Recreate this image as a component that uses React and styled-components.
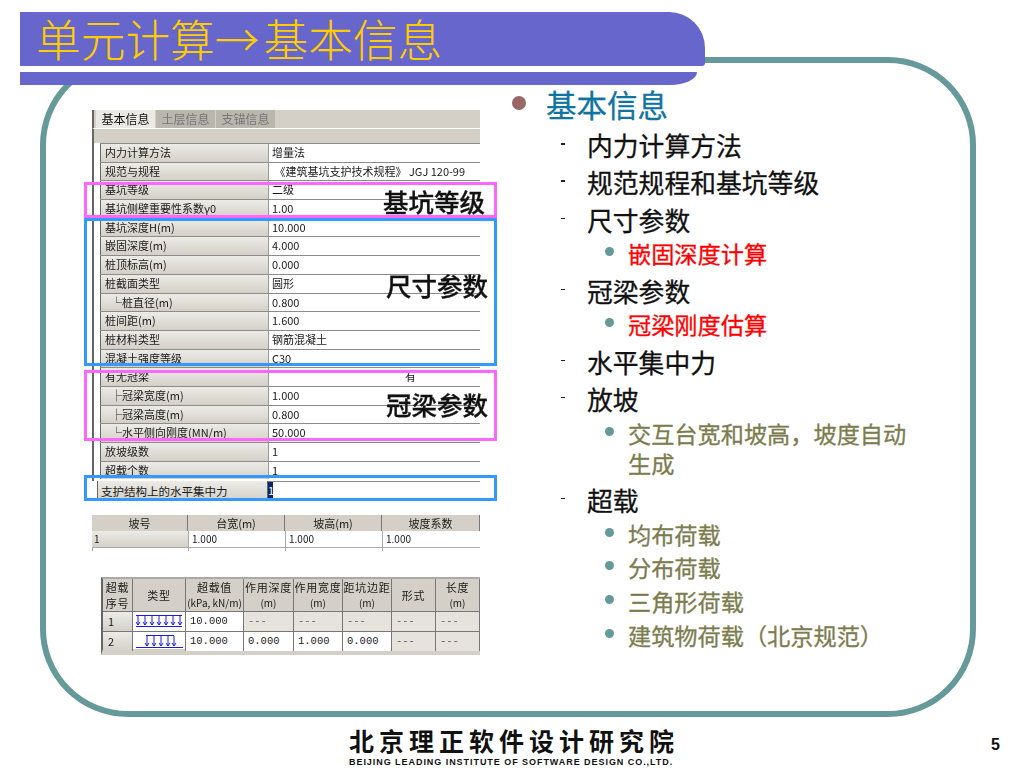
import styled, { createGlobalStyle } from 'styled-components'

const CJK = `"Noto Sans CJK SC", "Liberation Sans", sans-serif`

const GlobalStyle = createGlobalStyle`
  html, body {
    margin: 0;
    padding: 0;
    background: #fff;
    font-family: ${CJK};
  }
`

const formRows = [
  ['内力计算方法', '增量法'],
  ['规范与规程', ' 《建筑基坑支护技术规程》 JGJ 120-99'],
  ['基坑等级', '二级'],
  ['基坑侧壁重要性系数γ0', '1.00'],
  ['基坑深度H(m)', '10.000'],
  ['嵌固深度(m)', '4.000'],
  ['桩顶标高(m)', '0.000'],
  ['桩截面类型', '圆形'],
  ['└桩直径(m)', '0.800', true],
  ['桩间距(m)', '1.600'],
  ['桩材料类型', '钢筋混凝土'],
  ['混凝土强度等级', 'C30'],
  ['有无冠梁', '有'],
  ['├冠梁宽度(m)', '1.000', true],
  ['├冠梁高度(m)', '0.800', true],
  ['└水平侧向刚度(MN/m)', '50.000', true],
  ['放坡级数', '1'],
  ['超载个数', '1'],
]

const slopeCols = ['坡号', '台宽(m)', '坡高(m)', '坡度系数']
const loadCols = [
  ['超载', '序号'],
  ['类型'],
  ['超载值', '(kPa, kN/m)'],
  ['作用深度', '(m)'],
  ['作用宽度', '(m)'],
  ['距坑边距', '(m)'],
  ['形式'],
  ['长度', '(m)'],
]
const loadRows = [
  { no: '1', wide: true, vals: ['10.000', '---', '---', '---', '---', '---'] },
  { no: '2', wide: false, vals: ['10.000', '0.000', '1.000', '0.000', '---', '---'] },
]

const outline = [
  { level: 1, text: '基本信息' },
  { level: 2, text: '内力计算方法' },
  { level: 2, text: '规范规程和基坑等级' },
  { level: 2, text: '尺寸参数' },
  { level: 3, text: '嵌固深度计算', tone: 'red' },
  { level: 2, text: '冠梁参数' },
  { level: 3, text: '冠梁刚度估算', tone: 'red' },
  { level: 2, text: '水平集中力' },
  { level: 2, text: '放坡' },
  { level: 3, text: '交互台宽和坡高，坡度自动生成' },
  { level: 2, text: '超载' },
  { level: 3, text: '均布荷载' },
  { level: 3, text: '分布荷载' },
  { level: 3, text: '三角形荷载' },
  { level: 3, text: '建筑物荷载（北京规范）' },
]

const LoadIcon = ({ wide }) => (
  <svg width="50" height="15" viewBox="0 0 50 15" fill="none" stroke="#1a1ae0" strokeWidth="1">
    {wide ? (
      <>
        <path d="M2 1.5H48M2 12.5H48" />
        {[4, 11, 18, 25, 32, 39, 46].map((x) => (
          <path key={x} d={`M${x} 2V11M${x - 2} 8L${x} 11L${x + 2} 8`} />
        ))}
      </>
    ) : (
      <>
        <path d="M12 1.5H40M2 13.5H49" />
        {[13, 20, 27, 34, 40].map((x) => (
          <path key={x} d={`M${x} 2V12M${x - 2} 9L${x} 12L${x + 2} 9`} />
        ))}
      </>
    )}
  </svg>
)

const App = () => {
  return (
    <>
      <GlobalStyle />
      <Slide>
        <Banner>
          <BannerTop>
            <BannerTitle>
              单元计算<Arrow>→</Arrow>基本信息
            </BannerTitle>
          </BannerTop>
          <BannerBottom />
        </Banner>

        <Panel>
          <Shot>
            <FormWindow>
              <TabStrip>
                <Tab $active>基本信息</Tab>
                <Tab>土层信息</Tab>
                <Tab>支锚信息</Tab>
              </TabStrip>
              <FormTable>
                {formRows.map(([label, value, indent]) => (
                  <FormRow key={label}>
                    <FormLabel $indent={indent}>{label}</FormLabel>
                    <FormValue $center={value === '有'}>{value}</FormValue>
                  </FormRow>
                ))}
              </FormTable>
              <ForceRow>
                <ForceLabel>支护结构上的水平集中力</ForceLabel>
                <ForceValue>
                  <Selected>1</Selected>
                </ForceValue>
              </ForceRow>

              <Mark $color="#ff66ff" $top={72} $height={36}>
                <MarkText>基坑等级</MarkText>
              </Mark>
              <Mark $color="#3399ff" $top={108} $height={148}>
                <MarkText $top={49} $right={6}>尺寸参数</MarkText>
              </Mark>
              <Mark $color="#ff66ff" $top={260} $height={71}>
                <MarkText $top={16} $right={6}>冠梁参数</MarkText>
              </Mark>
              <Mark $color="#3399ff" $top={365} $height={26} />
            </FormWindow>

            <SlopeTable>
              <SlopeHead>
                {slopeCols.map((c) => (
                  <SlopeHeadCell key={c}>{c}</SlopeHeadCell>
                ))}
              </SlopeHead>
              <SlopeRow>
                <SlopeNo>1</SlopeNo>
                <SlopeCell>1.000</SlopeCell>
                <SlopeCell>1.000</SlopeCell>
                <SlopeCell>1.000</SlopeCell>
              </SlopeRow>
              <SlopeTail>
                <SlopeCell />
                <SlopeCell />
                <SlopeCell />
                <SlopeCell />
              </SlopeTail>
            </SlopeTable>

            <LoadTable>
              <LoadHead>
                {loadCols.map((lines) => (
                  <LoadHeadCell key={lines[0]}>
                    {lines.map((l) => (
                      <LoadHeadLine key={l} $small={l.startsWith('(')}>{l}</LoadHeadLine>
                    ))}
                  </LoadHeadCell>
                ))}
              </LoadHead>
              {loadRows.map((row) => (
                <LoadRow key={row.no}>
                  <LoadNo>{row.no}</LoadNo>
                  <LoadIconCell>
                    <LoadIcon wide={row.wide} />
                  </LoadIconCell>
                  {row.vals.map((v, i) => (
                    <LoadCell key={i} $off={v === '---'}>{v}</LoadCell>
                  ))}
                </LoadRow>
              ))}
            </LoadTable>
          </Shot>

          <Outline>
            {outline.map((item) => (
              <OutlineItem key={item.text} $level={item.level}>
                <Marker $level={item.level} />
                <OutlineText $level={item.level} $tone={item.tone}>{item.text}</OutlineText>
              </OutlineItem>
            ))}
          </Outline>
        </Panel>

        <Footer>
          <Logo>
            <LogoName>北京理正软件设计研究院</LogoName>
            <LogoSub>BEIJING LEADING INSTITUTE OF SOFTWARE DESIGN CO.,LTD.</LogoSub>
          </Logo>
          <PageNo>5</PageNo>
        </Footer>
      </Slide>
    </>
  )
}

// styled components -------
const Slide = styled.div`
  position: relative;
  width: 1024px;
  height: 768px;
  overflow: hidden;
  background: #fff;
`

const Banner = styled.header`
  position: absolute;
  top: 12px;
  left: 20px;
  width: 685px;
  display: flex;
  flex-direction: column;
  gap: 6px;
  background: #fff;
  z-index: 2;
`

const BannerTop = styled.div`
  height: 54px;
  background: #6666cc;
  border-radius: 0 36px 3px 0;
  display: flex;
  align-items: center;
  padding-left: 16px;
`

const BannerBottom = styled.div`
  width: 677px;
  height: 13px;
  background: #6666cc;
  border-radius: 0 0 27px 0 / 0 0 13px 0;
`

const BannerTitle = styled.h1`
  margin: -2px 0 0;
  color: #ffcc00;
  font-size: 44.7px;
  font-weight: 300;
  line-height: 54px;
  white-space: nowrap;
`

const Arrow = styled.span`
  margin-right: 4px;
`

const Panel = styled.main`
  box-sizing: border-box;
  width: 936px;
  height: 660px;
  margin: 57px 0 0 40px;
  padding: 26px 0 0 46px;
  border: 6px solid #669999;
  border-radius: 88px;
  display: flex;
  align-items: flex-start;
  gap: 32px;
`

const Shot = styled.section`
  width: 388px;
  margin-top: 21px;
  flex: none;
  display: flex;
  flex-direction: column;
  filter: blur(0.35px);
  color: #1a1a1a;
`

const FormWindow = styled.div`
  position: relative;
  height: 391px;
`

const TabStrip = styled.div`
  height: 18px;
  padding-left: 2px;
  display: flex;
  background: #d4d0c8;
  border-bottom: 1px solid #fff;
  border-left: 2px solid #666;
`

const Tab = styled.div`
  width: 59px;
  margin-right: 1px;
  font-size: 12px;
  line-height: 18px;
  text-align: center;
  white-space: nowrap;
  color: ${(p) => (p.$active ? '#111' : '#777')};
  background: ${(p) => (p.$active ? '#ebe9e4' : '#b9b6ae')};
`

const FormTable = styled.div`
  box-sizing: border-box;
  height: 352px;
  padding: 14px 0 0 6px;
  border-left: 2px solid #666;
  background: linear-gradient(#d4d0c8 14px, #fff 14px);
  overflow: hidden;
`

const FormRow = styled.div`
  display: grid;
  grid-template-columns: 169px 1fr;
  height: 18.7px;
  border-top: 1px solid #8c8c8c;
  box-sizing: border-box;
`

const FormLabel = styled.div`
  padding-left: ${(p) => (p.$indent ? 10 : 4)}px;
  font-size: 11px;
  line-height: 17px;
  white-space: nowrap;
  background: linear-gradient(#ecebe6, #d4d0c8);
  border-left: 1px solid #666;
  border-right: 1px solid #999;
`

const FormValue = styled.div`
  padding-left: ${(p) => (p.$center ? 136 : 3)}px;
  font-size: 11px;
  line-height: 17px;
  white-space: pre;
  background: #fff;
`

const ForceRow = styled.div`
  display: grid;
  grid-template-columns: 171px 1fr;
  height: 20px;
  padding-left: 5px;
  background: #fff;
`

const ForceLabel = styled.div`
  padding-left: 3px;
  font-size: 11.5px;
  line-height: 20px;
  background: linear-gradient(#ecebe6, #d4d0c8);
  border-left: 1px solid #666;
  border-right: 1px solid #666;
`

const ForceValue = styled.div`
  font-size: 11px;
  line-height: 16px;
  background: #fff;
  border-top: 1px solid #8c8c8c;
`

const Selected = styled.span`
  display: inline-block;
  width: 5px;
  color: #fff;
  background: #0a246a;
`

const Mark = styled.div`
  position: absolute;
  box-sizing: border-box;
  left: -8px;
  width: 413px;
  top: ${(p) => p.$top}px;
  height: ${(p) => p.$height}px;
  border: 3px solid ${(p) => p.$color};
`

const MarkText = styled.span`
  position: absolute;
  top: ${(p) => p.$top ?? 1}px;
  right: ${(p) => p.$right ?? 9}px;
  font-size: 25.5px;
  font-weight: 500;
  line-height: 30px;
  color: #111;
  white-space: nowrap;
  -webkit-text-stroke: 0.3px #111;
`

const SlopeTable = styled.div`
  margin-top: 14px;
`

const slopeGrid = '96px 97px 97px 98px'

const SlopeHead = styled.div`
  display: grid;
  grid-template-columns: ${slopeGrid};
  height: 16px;
  background: #d4d0c8;
`

const SlopeHeadCell = styled.div`
  font-size: 11px;
  line-height: 16px;
  text-align: center;
  border-right: 1px solid #777;
`

const SlopeRow = styled.div`
  display: grid;
  grid-template-columns: ${slopeGrid};
  height: 16px;
  border-bottom: 1px solid #aaa;
`

const SlopeTail = styled.div`
  display: grid;
  grid-template-columns: ${slopeGrid};
  height: 3px;
`

const SlopeNo = styled.div`
  padding-left: 2px;
  font-size: 10px;
  line-height: 15px;
  background: linear-gradient(#ecebe6, #d4d0c8);
`

const SlopeCell = styled.div`
  padding-left: 3px;
  font-size: 10px;
  line-height: 15px;
  border-left: 1px solid #aaa;
`

const LoadTable = styled.div`
  width: 379px;
  margin: 26px 0 0 9px;
  border-left: 2px solid #666;
  border-top: 2px solid #aaa;
  border-bottom: 6px solid #d4d0c8;
  box-sizing: border-box;
  height: 78px;
`

const loadGrid = '30px 53px 58px 50px 49px 49px 44px 44px'

const LoadHead = styled.div`
  display: grid;
  grid-template-columns: ${loadGrid};
  height: 32px;
  background: #d4d0c8;
`

const LoadHeadCell = styled.div`
  display: flex;
  flex-direction: column;
  justify-content: center;
  align-items: center;
  white-space: nowrap;
  overflow: hidden;
  border-right: 1px solid #777;
`

const LoadHeadLine = styled.span`
  font-size: ${(p) => (p.$small ? 10 : 11)}px;
  line-height: 16px;
  letter-spacing: ${(p) => (p.$small ? 0 : 0.7)}px;
`

const LoadRow = styled.div`
  display: grid;
  grid-template-columns: ${loadGrid};
  height: 19px;
  border-top: 1px solid #777;
`

const LoadNo = styled.div`
  padding-left: 5px;
  font-size: 11px;
  line-height: 18px;
  background: linear-gradient(#ecebe6, #d4d0c8);
  border-right: 1px solid #777;
`

const LoadIconCell = styled.div`
  display: flex;
  align-items: center;
  justify-content: center;
  border-right: 1px solid #777;
`

const LoadCell = styled.div`
  padding-left: 4px;
  font-family: "Liberation Mono", monospace;
  font-size: 10.5px;
  line-height: 18px;
  color: ${(p) => (p.$off ? '#666' : '#222')};
  background: ${(p) => (p.$off ? '#e6e3dc' : '#fff')};
  border-right: 1px solid #777;
`

const Outline = styled.ul`
  list-style: none;
  margin: 0;
  padding: 0;
  width: 400px;
`

const OutlineItem = styled.li`
  display: flex;
  align-items: flex-start;
  margin-top: ${(p) => ({ 1: 0, 2: 7.3, 3: 3.7 }[p.$level])}px;
  padding-left: ${(p) => ({ 1: 0, 2: 49, 3: 93 }[p.$level])}px;

  &:nth-child(2) {
    margin-top: 11px;
  }
`

const Marker = styled.span`
  flex: none;
  display: block;
  ${(p) =>
    p.$level === 1 &&
    `width: 14px; height: 14px; margin: 7px 20px 0 0; border-radius: 50%; background: #996666;`}
  ${(p) =>
    p.$level === 2 &&
    `width: 4px; height: 1.5px; margin: 13px 22px 0 0; background: #222;`}
  ${(p) =>
    p.$level === 3 &&
    `width: 9px; height: 9px; margin: 9px 14px 0 0; border-radius: 50%; background: #669999;`}
`

const OutlineText = styled.span`
  font-size: ${(p) => ({ 1: 30.5, 2: 25.8, 3: 23.2 }[p.$level])}px;
  line-height: 30px;
  width: ${(p) => (p.$level === 3 ? '280px' : 'auto')};
  -webkit-text-stroke: 0.3px currentColor;
  color: ${(p) =>
    p.$level === 1 ? '#0f74a0' : p.$level === 2 ? '#111' : p.$tone === 'red' ? '#ff0000' : '#7c7c4e'};
`

const Footer = styled.footer`
  display: flex;
  align-items: flex-start;
  padding: 9px 24px 0 349px;
`

const Logo = styled.div`
  width: 326px;
  flex: none;
`

const LogoName = styled.div`
  font-size: 25px;
  font-weight: 700;
  line-height: 28px;
  letter-spacing: 5px;
  color: #111;
  white-space: nowrap;
`

const LogoSub = styled.div`
  margin-top: 3px;
  font-family: "Liberation Sans", sans-serif;
  font-size: 9px;
  font-weight: 700;
  line-height: 10px;
  letter-spacing: 0.95px;
  color: #111;
  white-space: nowrap;
`

const PageNo = styled.div`
  margin: 11px 0 0 auto;
  font-family: "Liberation Sans", sans-serif;
  font-size: 16px;
  font-weight: 700;
  line-height: 16px;
  color: #111;
`
//--------------------
export default App
